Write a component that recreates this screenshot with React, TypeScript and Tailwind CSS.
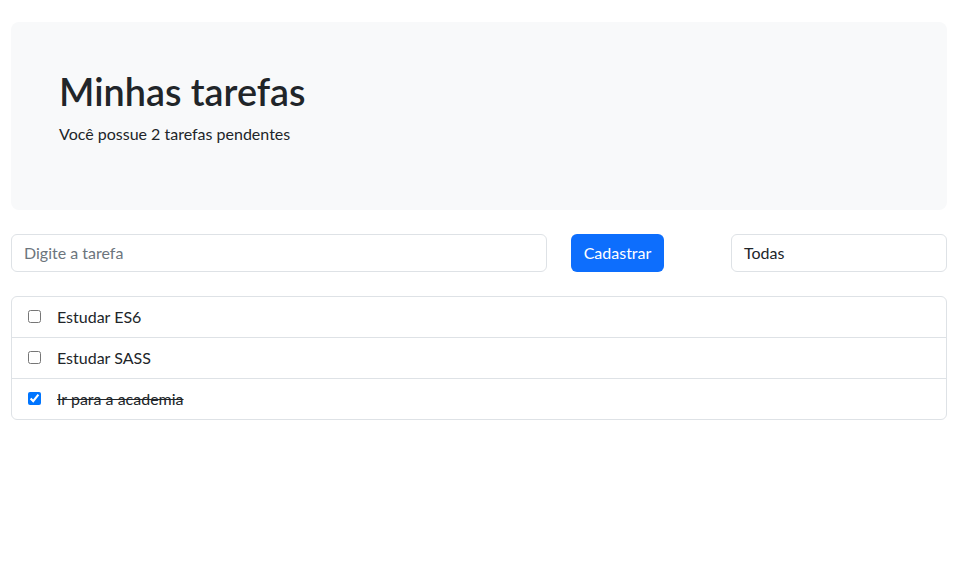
export default function App() {
  const tasks = [
    { text: "Estudar ES6", done: false },
    { text: "Estudar SASS", done: false },
    { text: "Ir para a academia", done: true },
  ];
  return (
    <div className="min-h-[563px] bg-white px-[11px] pt-[22px] text-[#212529]" style={{ fontFamily: 'Lato, sans-serif' }}>
      <div className="rounded-lg bg-[#f8f9fa] px-12 pt-12 pb-12">
        <h1 className="mb-2 text-[37.8px] font-semibold leading-[43.6px]">Minhas tarefas</h1>
        <p className="mb-4 text-base leading-6">Você possue 2 tarefas pendentes</p>
      </div>

      <div className="mt-6 flex items-center">
        <input
          type="text"
          placeholder="Digite a tarefa"
          className="h-[38px] w-[536px] rounded-md border border-[#dee2e6] bg-white px-3 text-base text-[#212529] placeholder:text-[#6c757d] outline-none"
        />
        <button className="ml-[24px] h-[38px] w-[93px] rounded-md bg-[#0d6efd] text-base text-white">Cadastrar</button>
        <div className="ml-auto flex h-[38px] w-[216px] items-center rounded-md border border-[#dee2e6] bg-white px-3 text-base">
          Todas
        </div>
      </div>

      <ul className="mt-6 rounded-md border border-[#dee2e6]">
        {tasks.map((t, i) => (
          <li
            key={t.text}
            className={`flex items-center px-4 ${i > 0 ? "h-[41px] border-t border-[#dee2e6]" : "h-[40px]"}`}
          >
            <input
              type="checkbox"
              defaultChecked={t.done}
              className="m-0 h-[13px] w-[13px] accent-[#0075ff]"
            />
            <span className={`ml-4 text-base ${t.done ? "line-through" : ""}`}>{t.text}</span>
          </li>
        ))}
      </ul>
    </div>
  );
}
